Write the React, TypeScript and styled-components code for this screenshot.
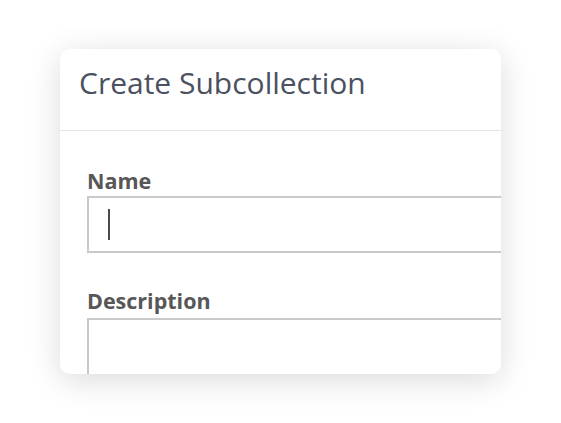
import * as React from 'react'
import styled, { createGlobalStyle } from 'styled-components'

const GlobalStyle = createGlobalStyle`
	html, body {
		margin: 0;
		padding: 0;
		background: #ffffff;
		font-family: 'Open Sans', sans-serif;
	}
`

export default function App(): JSX.Element {
	return (
		<>
			<GlobalStyle />
			<Page>
				<Card>
					<Header>
						<Title>Create Subcollection</Title>
					</Header>
					<Body>
						<Field>
							<Label htmlFor="subcollection-name">Name</Label>
							<InputBox id="subcollection-name">
								<Caret />
							</InputBox>
						</Field>
						<Field>
							<Label htmlFor="subcollection-description">Description</Label>
							<TextBox id="subcollection-description" />
						</Field>
					</Body>
				</Card>
			</Page>
		</>
	)
}

const Page = styled.div`
	width: 561px;
	height: 423px;
	padding: 49px 0 0 60px;
	box-sizing: border-box;
	overflow: hidden;
`

const Card = styled.div`
	width: 441px;
	height: 325px;
	background: #ffffff;
	border-radius: 10px;
	box-shadow: 0 6px 32px rgba(0, 0, 0, 0.15);
	overflow: hidden;
	display: flex;
	flex-direction: column;
`

const Header = styled.div`
	height: 82px;
	box-sizing: border-box;
	padding: 14px 0 0 19px;
	border-bottom: 1px solid #e4e4e4;
	flex: none;
`

const Title = styled.h1`
	margin: 0;
	font-family: 'Open Sans', sans-serif;
	font-weight: 400;
	font-size: 30px;
	line-height: 40px;
	color: #4a5160;
	white-space: nowrap;
`

const Body = styled.div`
	padding: 36px 0 0 27px;
	display: flex;
	flex-direction: column;
	gap: 34px;
`

const Field = styled.div`
	display: flex;
	flex-direction: column;
`

const Label = styled.label`
	font-family: 'Open Sans', sans-serif;
	font-weight: 700;
	font-size: 21.5px;
	line-height: 28px;
	color: #575757;
	margin-bottom: 1px;
`

const InputBox = styled.div`
	width: 480px;
	height: 57px;
	box-sizing: border-box;
	border: 2px solid #c9c9c9;
	background: #ffffff;
	display: flex;
	align-items: center;
	padding-left: 19px;
`

const Caret = styled.span`
	display: block;
	width: 2px;
	height: 31px;
	background: #4a4a4a;
`

const TextBox = styled.div`
	width: 480px;
	height: 120px;
	box-sizing: border-box;
	border: 2px solid #c9c9c9;
	margin-top: 2px;
	background: #ffffff;
`
